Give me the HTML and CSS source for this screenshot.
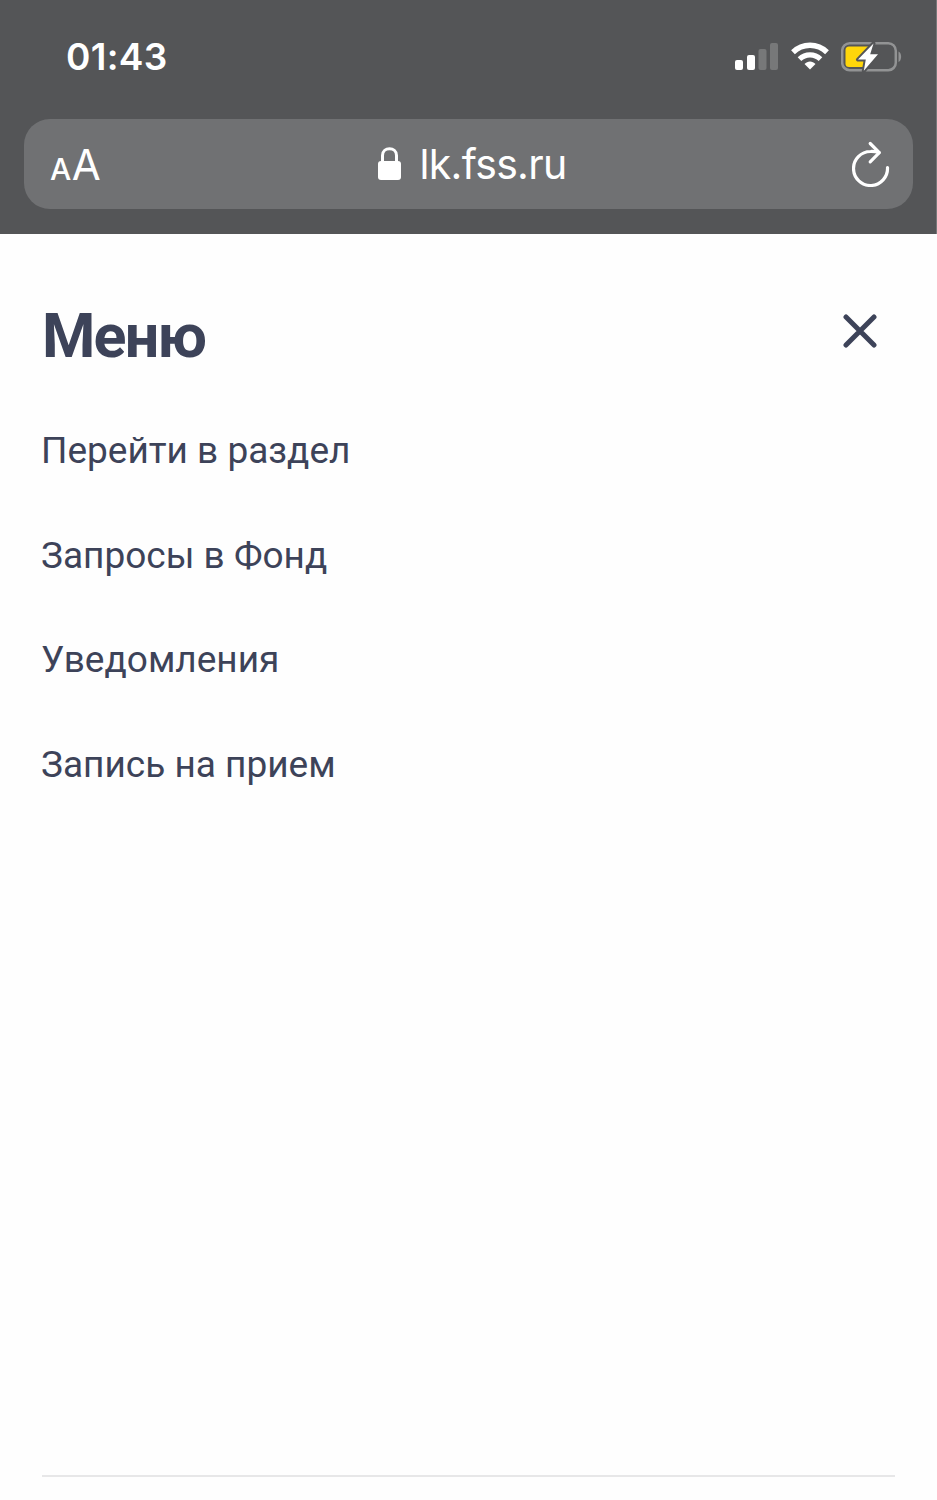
FILE: index.html
```html
<!DOCTYPE html>
<html lang="ru">
<head>
    <meta charset="UTF-8">
    <meta name="viewport" content="width=device-width, initial-scale=1.0">
    <title>Меню</title>
    <link rel="stylesheet" href="styles.css">
</head>
<body>
    <header class="browser">
        <div class="status-bar">
            <div class="time">01:43</div>
            <div class="status-icons">
                <svg class="signal" width="44" height="28" viewBox="0 0 44 28">
                    <rect x="0" y="17" width="8" height="10" rx="2" fill="#fff"/>
                    <rect x="12" y="12" width="8" height="15" rx="2" fill="#fff"/>
                    <rect x="23.5" y="6" width="8" height="21" rx="2" fill="#777879"/>
                    <rect x="35" y="0" width="8" height="27" rx="2" fill="#777879"/>
                </svg>
                <svg class="wifi" width="38" height="28" viewBox="0 0 38 28">
                    <path d="M2 10.2C11.5 .9 26.5 .9 36 10.2" fill="none" stroke="#fff" stroke-width="5.4"/>
                    <path d="M8.5 17.2C14.5 11.4 23.5 11.4 29.5 17.2" fill="none" stroke="#fff" stroke-width="5.2"/>
                    <path d="M13.5 22C16.6 18.6 21.4 18.6 24.500 22L19 27.400Z" fill="#fff"/>
                </svg>
                <svg class="battery" width="62" height="32" viewBox="0 0 62 32">
                    <rect x="1.2" y="3.2" width="53.6" height="27" rx="7.5" fill="none" stroke="#929394" stroke-width="2.5"/>
                    <path d="M57.500 11.500C61 13 61 20.400 57.500 22Z" fill="#929394"/>
                    <path d="M8 6.500H27V27H8Q4.500 27 4.500 23.500V10Q4.500 6.500 8 6.500Z" fill="#ffd60a"/>
                    <path d="M32.500 3.500 17 19.600H24.800L22.800 30.800 37 14.200H29.200Z" fill="#fff" stroke="#545557" stroke-width="4" stroke-linejoin="round" paint-order="stroke"/>
                </svg>
            </div>
        </div>
        <div class="address-bar">
            <div class="text-size"><span class="small">A</span><span class="large">A</span></div>
            <div class="url">
                <svg width="24" height="34" viewBox="0 0 24 34">
                    <path d="M4.500 16V8.500C4.500-.5 18.500-.5 18.500 8.500V16" fill="none" stroke="#fff" stroke-width="3"/>
                    <rect x="0" y="14" width="23" height="19" rx="3" fill="#fff"/>
                </svg>
                <span>lk.fss.ru</span>
            </div>
            <svg class="reload" width="38" height="46" viewBox="0 0 38 46">
                <g fill="none" stroke="#fff" stroke-width="3.2" stroke-linecap="round" stroke-linejoin="round">
                    <path d="M35.5 26.500A17 17 0 1 1 18.500 10.500Q22.500 10.300 27 11.500"/>
                    <path d="M18.200 2.500 27.300 11.700 18.200 20.800"/>
                </g>
            </svg>
        </div>
    </header>

    <main class="menu">
        <div class="menu-header">
            <h1>Меню</h1>
            <button class="close" aria-label="Закрыть">
                <svg width="34" height="34" viewBox="0 0 34 34">
                    <path d="M3 3 31 31M31 3 3 31" stroke="#3d4359" stroke-width="5" stroke-linecap="round"/>
                </svg>
            </button>
        </div>
        <nav class="menu-list">
            <a href="#">Перейти в раздел</a>
            <a href="#">Запросы в Фонд</a>
            <a href="#">Уведомления</a>
            <a href="#">Запись на прием</a>
        </nav>
        <div class="divider"></div>
    </main>
</body>
</html>
```
FILE: styles.css
```css
* {
    box-sizing: border-box;
}

body {
    margin: 0;
    height: 1500px;
    display: flex;
    flex-direction: column;
    background: #fefefe;
    color: #3d4359;
    font-family: Roboto, sans-serif;
    overflow: hidden;
}

svg {
    display: block;
    flex: none;
}

.browser {
    height: 234px;
    padding: 0 23px 0 24px;
    background: #545557;
    border-right: 1px solid #77787a;
    color: #fff;
    font-family: Inter, sans-serif;
}

.status-bar {
    height: 119px;
    padding: 34px 10px 0 42px;
    display: flex;
    justify-content: space-between;
}

.time {
    font-size: 37px;
    font-weight: 600;
    line-height: 46px;
    letter-spacing: 0.3px;
}

.status-icons {
    display: flex;
    align-items: flex-start;
    padding-top: 6px;
}

.signal {
    margin: 3px 12px 0 0;
}

.wifi {
    margin: 2px 12px 0 0;
}

.address-bar {
    height: 90px;
    padding: 0 23px 0 26px;
    display: grid;
    grid-template-columns: 1fr auto 1fr;
    align-items: center;
    border-radius: 26px;
    background: #707173;
}

.text-size {
    display: flex;
    align-items: baseline;
    gap: 1px;
}

.small {
    font-size: 30px;
    font-weight: 500;
    letter-spacing: -0.5px;
}

.large {
    font-size: 42px;
    letter-spacing: -1px;
}

.url {
    display: flex;
    align-items: center;
    gap: 18px;
    padding-left: 4px;
    font-size: 41px;
    line-height: 50px;
    letter-spacing: -0.7px;
}

.reload {
    justify-self: end;
}

.menu {
    flex: 1;
    padding: 0 42px;
    display: flex;
    flex-direction: column;
}

.menu-header {
    display: flex;
    justify-content: space-between;
    padding: 66px 18px 0 0;
}

h1 {
    margin: 0;
    font-size: 61px;
    line-height: 72px;
    font-weight: 700;
    letter-spacing: -1.8px;
}

.close {
    margin-top: 14px;
    padding: 0;
    height: 34px;
    border: 0;
    background: none;
}

.menu-list {
    display: flex;
    flex-direction: column;
    align-items: flex-start;
    gap: 60.7px;
    margin-left: -1px;
    padding-top: 57px;
}

.menu-list a {
    color: inherit;
    text-decoration: none;
    font-size: 37px;
    line-height: 44px;
}

.divider {
    height: 2px;
    margin: auto 0 23px;
    background: #e7e7e8;
}
```
